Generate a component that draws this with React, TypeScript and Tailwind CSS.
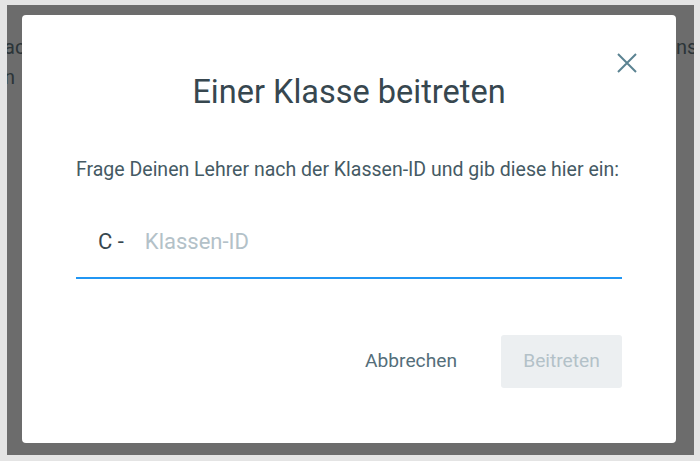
import { useState } from 'react';

export default function App() {
  const [classId, setClassId] = useState('');

  return (
    <div className="flex h-[461px] w-[700px] bg-[#e4e4e4] pb-[6px] pl-[7px] pr-[6px] pt-[5px] font-['Roboto',sans-serif]">
      <div className="flex flex-1 bg-[#6c6c6c]">
        <div className="w-[15px] overflow-hidden whitespace-nowrap pt-[27px] text-[20px] leading-[30px] text-[#2b3438]">
          <div className="-ml-[3px]">ac</div>
          <div className="-ml-[3px]">n</div>
        </div>
        <div className="mb-[12px] mt-[10px] flex flex-1 flex-col rounded-[4px] bg-white px-[54px]">
          <div className="flex justify-end pt-[38px]">
            <button className="-mr-[15px] text-[#5b8392]" aria-label="Schließen">
              <svg width="20" height="20" viewBox="0 0 20 20" fill="none" stroke="currentColor" strokeWidth="2">
                <path d="M1 1L19 19M19 1L1 19" />
              </svg>
            </button>
          </div>
          <h2 className="text-center text-[32.5px] leading-[38px] text-[#37474f]">
            Einer Klasse beitreten
          </h2>
          <p className="mt-[47px] text-[19.5px] leading-[24px] text-[#455a64]">
            Frage Deinen Lehrer nach der Klassen-ID und gib diese hier ein:
          </p>
          <div className="mt-[46px] flex items-center border-b-2 border-[#2196f3] pb-[21px] pl-[22px] text-[22px] leading-[28px]">
            <span className="text-[#37474f]">C -</span>
            <input
              value={classId}
              onChange={(e) => setClassId(e.target.value)}
              placeholder="Klassen-ID"
              className="ml-[21px] flex-1 bg-transparent text-[#37474f] outline-none placeholder:text-[#b3c1c8]"
            />
          </div>
          <div className="mt-[56px] flex items-center justify-end gap-[44px]">
            <button className="text-[19.2px] text-[#546e7a]">Abbrechen</button>
            <button
              disabled
              className="h-[53px] w-[121px] rounded-[3px] bg-[#eceff1] text-[19.2px] text-[#b3c1c8]"
            >
              Beitreten
            </button>
          </div>
        </div>
        <div className="w-[18px] overflow-hidden whitespace-nowrap pt-[27px] text-[20px] leading-[30px] text-[#2b3438]">
          <div>ns</div>
        </div>
      </div>
    </div>
  );
}
